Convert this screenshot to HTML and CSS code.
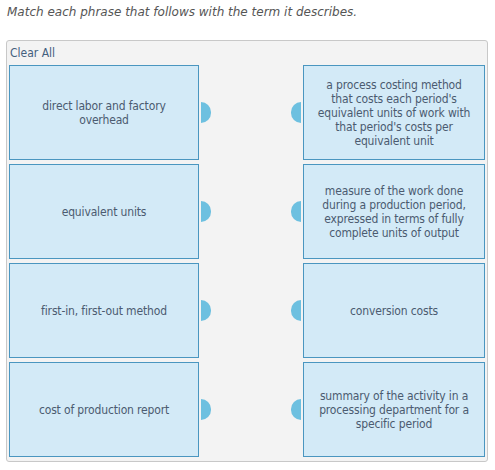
FILE: index.html
```html
<!DOCTYPE html>
<html lang="en">
<head>
  <meta charset="UTF-8">
  <title>Matching</title>
  <link rel="stylesheet" href="styles.css">
</head>
<body>
  <p class="prompt">Match each phrase that follows with the term it describes.</p>

  <div class="matcher">
    <div class="toolbar">
      <button class="clear">Clear All</button>
    </div>

    <div class="rows">
      <div class="row">
        <div class="term">
          <div class="box">direct labor and factory overhead</div>
          <span class="knob knob-right"></span>
        </div>
        <div class="term">
          <span class="knob knob-left"></span>
          <div class="box box-def">a process costing method that costs each period's equivalent units of work with that period's costs per equivalent unit</div>
        </div>
      </div>

      <div class="row">
        <div class="term">
          <div class="box">equivalent units</div>
          <span class="knob knob-right"></span>
        </div>
        <div class="term">
          <span class="knob knob-left"></span>
          <div class="box box-def">measure of the work done during a production period, expressed in terms of fully complete units of output</div>
        </div>
      </div>

      <div class="row">
        <div class="term">
          <div class="box">first-in, first-out method</div>
          <span class="knob knob-right"></span>
        </div>
        <div class="term">
          <span class="knob knob-left"></span>
          <div class="box box-def">conversion costs</div>
        </div>
      </div>

      <div class="row">
        <div class="term">
          <div class="box">cost of production report</div>
          <span class="knob knob-right"></span>
        </div>
        <div class="term">
          <span class="knob knob-left"></span>
          <div class="box box-def">summary of the activity in a processing department for a specific period</div>
        </div>
      </div>
    </div>
  </div>
</body>
</html>
```

FILE: styles.css
```css
body {
    margin: 0;
    background: #ffffff;
    font-family: "DejaVu Sans Condensed", "DejaVu Sans", sans-serif;
}

.prompt {
    margin: 5px 0 0 7px;
    font-family: "DejaVu Sans", sans-serif;
    font-style: italic;
    font-size: 12px;
    line-height: 14px;
    color: #555555;
}

.matcher {
    margin: 21px 0 0 6px;
    width: 482px;
    box-sizing: border-box;
    border: 1px solid #c8c8c8;
    border-radius: 3px;
    background: #f3f3f3;
    padding: 0 2px 4px 2px;
}

.toolbar {
    height: 24px;
    display: flex;
    align-items: center;
}

.clear {
    border: none;
    background: none;
    padding: 0 0 0 1px;
    font-family: inherit;
    font-size: 12px;
    color: #44607e;
    cursor: pointer;
}

.rows {
    display: flex;
    flex-direction: column;
    gap: 4px;
}

.row {
    display: flex;
    justify-content: space-between;
}

.term {
    display: flex;
    align-items: center;
}

.box {
    width: 190px;
    height: 95px;
    box-sizing: border-box;
    border: 1px solid #4a96c0;
    background: #d3eaf7;
    display: flex;
    align-items: center;
    justify-content: center;
    text-align: center;
    padding: 0 12px;
    font-size: 12px;
    line-height: 14px;
    letter-spacing: -0.15px;
    color: #4b5b70;
}

.box-def {
    width: 182px;
}

.knob {
    width: 10px;
    height: 21px;
    background: #6dc0e0;
}

.knob-right {
    margin-left: 2px;
    border-radius: 0 11px 11px 0;
}

.knob-left {
    margin-right: 2px;
    border-radius: 11px 0 0 11px;
}
```
